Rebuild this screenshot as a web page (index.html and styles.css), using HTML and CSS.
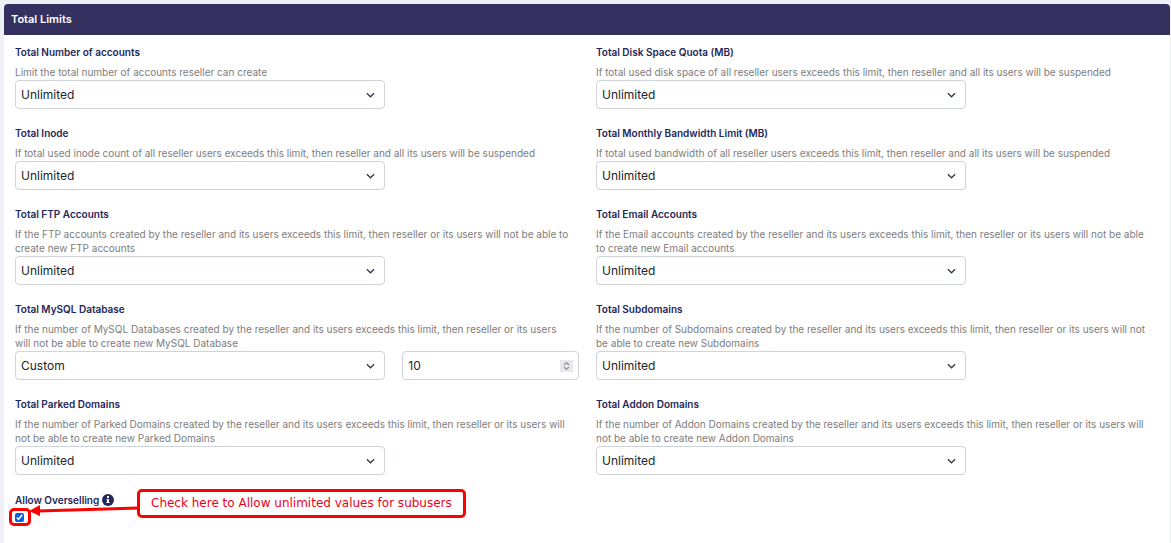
FILE: index.html
```html
<!DOCTYPE html>
<html lang="en">
<head>
  <meta charset="UTF-8">
  <meta name="viewport" content="width=device-width, initial-scale=1">
  <title>Total Limits</title>
  <link rel="stylesheet" href="styles.css">
</head>
<body>
  <form class="panel">
    <h2 class="panel-header">Total Limits</h2>
    <div class="panel-body">
      <div class="field">
        <label for="accounts">Total Number of accounts</label>
        <p class="hint">Limit the total number of accounts reseller can create</p>
        <div class="controls">
          <select id="accounts"><option>Unlimited</option><option>Custom</option></select>
        </div>
      </div>
      <div class="field">
        <label for="disk">Total Disk Space Quota (MB)</label>
        <p class="hint">If total used disk space of all reseller users exceeds this limit, then reseller and all its users will be suspended</p>
        <div class="controls">
          <select id="disk"><option>Unlimited</option><option>Custom</option></select>
        </div>
      </div>

      <div class="field">
        <label for="inode">Total Inode</label>
        <p class="hint">If total used inode count of all reseller users exceeds this limit, then reseller and all its users will be suspended</p>
        <div class="controls">
          <select id="inode"><option>Unlimited</option><option>Custom</option></select>
        </div>
      </div>
      <div class="field">
        <label for="bandwidth">Total Monthly Bandwidth Limit (MB)</label>
        <p class="hint">If total used bandwidth of all reseller users exceeds this limit, then reseller and all its users will be suspended</p>
        <div class="controls">
          <select id="bandwidth"><option>Unlimited</option><option>Custom</option></select>
        </div>
      </div>

      <div class="field">
        <label for="ftp">Total FTP Accounts</label>
        <p class="hint">If the FTP accounts created by the reseller and its users exceeds this limit, then reseller or its users will not be able to create new FTP accounts</p>
        <div class="controls">
          <select id="ftp"><option>Unlimited</option><option>Custom</option></select>
        </div>
      </div>
      <div class="field">
        <label for="email">Total Email Accounts</label>
        <p class="hint">If the Email accounts created by the reseller and its users exceeds this limit, then reseller or its users will not be able to create new Email accounts</p>
        <div class="controls">
          <select id="email"><option>Unlimited</option><option>Custom</option></select>
        </div>
      </div>

      <div class="field">
        <label for="mysql">Total MySQL Database</label>
        <p class="hint">If the number of MySQL Databases created by the reseller and its users exceeds this limit, then reseller or its users will not be able to create new MySQL Database</p>
        <div class="controls">
          <select id="mysql"><option>Unlimited</option><option selected>Custom</option></select>
          <input type="number" id="mysql_custom" value="10" min="0" aria-label="Custom MySQL Database limit">
        </div>
      </div>
      <div class="field">
        <label for="subdomains">Total Subdomains</label>
        <p class="hint">If the number of Subdomains created by the reseller and its users exceeds this limit, then reseller or its users will not be able to create new Subdomains</p>
        <div class="controls">
          <select id="subdomains"><option>Unlimited</option><option>Custom</option></select>
        </div>
      </div>

      <div class="field">
        <label for="parked">Total Parked Domains</label>
        <p class="hint">If the number of Parked Domains created by the reseller and its users exceeds this limit, then reseller or its users will not be able to create new Parked Domains</p>
        <div class="controls">
          <select id="parked"><option>Unlimited</option><option>Custom</option></select>
        </div>
      </div>
      <div class="field">
        <label for="addon">Total Addon Domains</label>
        <p class="hint">If the number of Addon Domains created by the reseller and its users exceeds this limit, then reseller or its users will not be able to create new Addon Domains</p>
        <div class="controls">
          <select id="addon"><option>Unlimited</option><option>Custom</option></select>
        </div>
      </div>

      <div class="field overselling">
        <label for="overselling">Allow Overselling
          <svg class="info" viewBox="0 0 12 12" aria-hidden="true">
            <circle cx="6" cy="6" r="6" fill="#23275a"/>
            <rect x="5" y="2" width="2" height="2" fill="#fff"/>
            <path d="M4.500 5H7v3h.700v1H4.300V8H5V6h-.500z" fill="#fff"/>
          </svg>
        </label>
        <input type="checkbox" id="overselling" checked>

        <!-- callout drawn over the checkbox -->
        <span class="ring"></span>
        <svg class="arrow" viewBox="0 0 110 14" aria-hidden="true">
          <path d="M110 5L9 8" stroke="#f00" stroke-width="3"/>
          <path d="M0 8L11 2v11z" fill="#f00"/>
        </svg>
        <span class="callout">Check here to Allow unlimited values for subusers</span>
      </div>
    </div>
  </form>
</body>
</html>
```
FILE: styles.css
```css
* {
  box-sizing: border-box;
}
body {
  margin: 0;
  padding: 4px 1px 0 4px;
  min-height: 100vh;
  display: flex;
  background: #eff0f6;
  font-family: Inter, sans-serif;
  color: #212529;
}
.panel {
  flex: 1;
  background: #fff;
  border-radius: 4px 4px 0 0;
}
.panel-header {
  margin: 0;
  padding: 0 7px;
  background: #343161;
  color: #fff;
  font-size: 11px;
  font-weight: 600;
  line-height: 31px;
  border-radius: 4px 4px 0 0;
}
.panel-body {
  display: grid;
  grid-template-columns: 1fr 1fr;
  gap: 16px 17px;
  padding: 9px 10px 16px 11px;
}
.field label {
  display: block;
  margin-bottom: 5px;
  color: #23275a;
  font-size: 10px;
  font-weight: 600;
  line-height: 16px;
}
.hint {
  margin: 0 0 1px;
  padding-right: 6px;
  color: #7d7d7d;
  font-size: 10px;
  line-height: 14px;
}
.controls {
  display: grid;
  grid-template-columns: repeat(3, 1fr);
  gap: 17px;
}
select,
input[type="number"] {
  width: 100%;
  height: 29px;
  padding: 0 5px;
  border: 1px solid #ced4da;
  border-radius: 4px;
  background: #fff;
  color: #212529;
  font-family: inherit;
  font-size: 12px;
}
select {
  grid-column: span 2;
  appearance: none;
  background: #fff url("data:image/svg+xml,%3Csvg xmlns='http://www.w3.org/2000/svg' viewBox='0 0 10 6'%3E%3Cpath d='M1 1l4 4 4-4' fill='none' stroke='%23343a40' stroke-width='1.4'/%3E%3C/svg%3E") no-repeat right 9px center / 9px 6px;
}
input[type="number"]::-webkit-inner-spin-button {
  appearance: none;
  width: 13px;
  height: 12px;
  margin-top: 2px;
  opacity: 1;
  background: #e9e9ed url("data:image/svg+xml,%3Csvg xmlns='http://www.w3.org/2000/svg' viewBox='0 0 13 12'%3E%3Cpath d='M4 5l2.500-2.500L9 5M4 7l2.500 2.500L9 7' fill='none' stroke='%238f8f9d' stroke-width='1.200'/%3E%3C/svg%3E") no-repeat center;
}
.overselling {
  position: relative;
  padding-top: 1px;
}
.overselling label {
  display: flex;
  align-items: center;
  gap: 3px;
}
.info {
  width: 12px;
  height: 12px;
}
input[type="checkbox"] {
  display: block;
  width: 9px;
  height: 9px;
  margin: 0;
  accent-color: #0060df;
}
.ring {
  position: absolute;
  left: -6px;
  top: 17px;
  width: 22px;
  height: 18px;
  border: 3px solid #f00;
  border-radius: 5px;
}
.arrow {
  position: absolute;
  left: 14px;
  top: 12px;
  width: 110px;
  height: 14px;
}
.callout {
  position: absolute;
  left: 122px;
  top: -2px;
  padding: 0 11px;
  border: 3px solid #f00;
  border-radius: 5px;
  background: #fff;
  color: #f00020;
  font-family: "DejaVu Sans", sans-serif;
  font-size: 12px;
  line-height: 23px;
  white-space: nowrap;
}
```
